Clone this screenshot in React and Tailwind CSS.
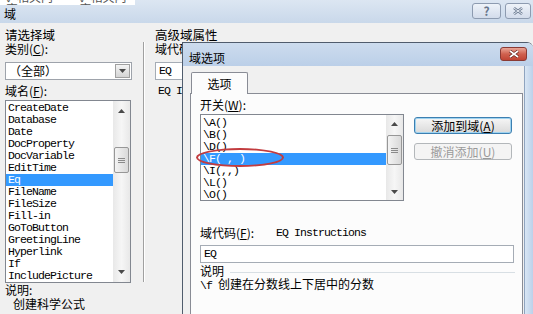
import React from 'react';

const fields = [
  'CreateDate',
  'Database',
  'Date',
  'DocProperty',
  'DocVariable',
  'EditTime',
  'Eq',
  'FileName',
  'FileSize',
  'Fill-in',
  'GoToButton',
  'GreetingLine',
  'Hyperlink',
  'If',
  'IncludePicture',
];

const switches = ['\\A()', '\\B()', '\\D()', '\\F( , )', '\\I(,,)', '\\L()', '\\O()'];

const mono = "font-['Liberation_Mono',monospace] text-[11.5px] tracking-[-0.9px]";

const Arrow = ({ down }) => (
  <svg width="7" height="4" viewBox="0 0 7 4">
    <path d={down ? 'M0 0h7L3.5 4z' : 'M0 4h7L3.5 0z'} fill="#4a4a4a" />
  </svg>
);

const ScrollBar = ({ btn, thumb }) => (
  <div className="flex w-[17px] flex-col bg-gradient-to-r from-[#e8e8e8] via-[#f6f6f6] to-[#e8e8e8]">
    <div className={`flex ${btn} items-center justify-center`}>
      <Arrow />
    </div>
    <div className="flex-1 px-[1px]">
      <div
        className={`flex ${thumb} flex-col items-center justify-center gap-[1px] rounded-[2px] border border-[#979797] bg-gradient-to-r from-[#f4f4f4] to-[#d9d9d9]`}
      >
        <div className="h-[1px] w-[7px] bg-[#8a8a8a]" />
        <div className="h-[1px] w-[7px] bg-[#8a8a8a]" />
        <div className="h-[1px] w-[7px] bg-[#8a8a8a]" />
      </div>
    </div>
    <div className={`flex ${btn} items-center justify-center`}>
      <Arrow down />
    </div>
  </div>
);

const FieldList = () => (
  <div className="mt-[2px] flex h-[183px] w-[126px] border border-[#828790] bg-white">
    <div className={`flex-1 overflow-hidden pt-[1px] ${mono} leading-[12px]`}>
      {fields.map((f) => (
        <div
          key={f}
          className={`h-[12px] pl-[2px] ${f === 'Eq' ? 'bg-[#3399ff] text-white' : ''}`}
        >
          {f}
        </div>
      ))}
    </div>
    <ScrollBar btn="h-[20px]" thumb="mt-[26px] h-[26px]" />
  </div>
);

const SwitchList = () => (
  <div className="relative">
    <div className="flex h-[87px] w-[204px] border border-[#828790] bg-white">
      <div className={`flex-1 overflow-hidden pt-[2px] ${mono} leading-[12px]`}>
        {switches.map((s) => (
          <div
            key={s}
            className={`h-[12px] pl-[2px] ${s === '\\F( , )' ? 'bg-[#3399ff] text-white' : ''}`}
          >
            {s}
          </div>
        ))}
      </div>
      <ScrollBar btn="h-[17px]" thumb="mt-[3px] h-[30px]" />
    </div>
    <div className="pointer-events-none absolute left-[-4px] top-[34px] h-[19px] w-[88px] rounded-[50%] border-2 border-[#c23c3f]" />
  </div>
);

const InnerDialog = () => (
  <div className="absolute left-[182px] top-[42px] flex h-[280px] w-[351px] flex-col overflow-hidden rounded-tr-[6px] border-l border-t border-[#505c6c] bg-[#f0f0f0]">
    <div className="flex h-[23px] shrink-0 items-start bg-gradient-to-b from-[#cddcee] to-[#bbcfe8]">
      <div className="pl-[6px] pt-[8px] text-[12px] leading-[14px]">域选项</div>
      <div className="ml-auto mr-[6px] mt-[4px] flex h-[14px] w-[27px] items-center justify-center rounded-[3px] border border-[#8a3a34] bg-gradient-to-b from-[#e9a597] via-[#d0614f] to-[#c04434]">
        <svg width="10" height="8" viewBox="0 0 10 8">
          <path d="M1 1l8 6M9 1L1 7" stroke="#5a1e18" strokeWidth="3" />
          <path d="M1 1l8 6M9 1L1 7" stroke="#ffffff" strokeWidth="1.6" />
        </svg>
      </div>
    </div>
    <div className="flex flex-1">
      <div className="flex w-[341px] flex-col pl-[7px] pt-[6px]">
        <div className="relative z-10 -mb-[1px] ml-[1px] flex h-[22px] w-[57px] items-center justify-center rounded-t-[2px] border border-b-0 border-[#898c95] bg-[#fcfcfc] text-[12px] leading-[14px]">
          选项
        </div>
        <div className="flex w-[333px] flex-1 flex-col border border-[#898c95] bg-[#fcfcfc] pl-[9px] pt-[4px]">
          <div className="text-[12px] leading-[14px]">
            开关(<u>W</u>):
          </div>
          <div className="mt-[2px] flex">
            <SwitchList />
            <div className="ml-[10px] mt-[3px] flex flex-col gap-[9px]">
              <div className="flex h-[17px] w-[98px] items-center justify-center rounded-[3px] border border-[#3c7fb1] bg-gradient-to-b from-[#f6f6f6] to-[#dadada] text-[12px] leading-[14px] shadow-[inset_0_0_0_1px_#9fd3f0]">
                添加到域(<u>A</u>)
              </div>
              <div className="flex h-[17px] w-[98px] items-center justify-center rounded-[3px] border border-[#b3b7ba] bg-[#f4f4f4] text-[12px] leading-[14px] text-[#9a9a9a]">
                撤消添加(<u>U</u>)
              </div>
            </div>
          </div>
          <div className="mt-[25px] flex items-center">
            <span className="w-[76px] text-[12px] leading-[14px]">
              域代码(<u>F</u>):
            </span>
            <span className={`${mono} leading-[14px]`}>EQ Instructions</span>
          </div>
          <div className="mt-[5px] flex h-[18px] w-[314px] items-center border border-[#a5acb5] bg-white pl-[3px]">
            <span className={`${mono} leading-[12px]`}>EQ</span>
          </div>
          <div className="mt-[1px] flex w-[315px] items-center">
            <span className="text-[12px] leading-[13px]">说明</span>
            <div className="ml-[6px] mt-[4px] h-[1px] flex-1 bg-[#d8dfe4]" />
          </div>
          <div className="text-[12px] leading-[13px]">
            <span className={mono}>\f </span>创建在分数线上下居中的分数
          </div>
        </div>
      </div>
      <div className="w-[9px] border-l border-[#8fa4bf] bg-gradient-to-r from-[#d9e6f4] to-[#bcd1ea]" />
    </div>
  </div>
);

export default function App() {
  return (
    <div className="relative h-[314px] w-[533px] overflow-hidden bg-[#f0f0f0] font-['Noto_Sans_CJK_SC',sans-serif] text-black">
      {/* outer title bar */}
      <div className="flex h-[23px] items-start bg-gradient-to-b from-[#dce6f2] to-[#c9d8ea]">
        <div className="flex flex-col">
          <div className="h-[5px] w-[135px] overflow-hidden bg-white">
            <div className="-mt-[9px] flex gap-[18px] pl-[6px] text-[12px] leading-[12px] text-[#555]">
              <span>✓ 相关内容</span>
              <span>✓ 相关内容</span>
            </div>
          </div>
          <div className="mt-[2px] pl-[4px] text-[12px] leading-[14px]">域</div>
        </div>
        <div className="ml-auto mr-[2px] mt-[3px] flex gap-[4px]">
          <div className="flex h-[16px] w-[29px] items-center justify-center rounded-[3px] border border-[#8d9bb0] bg-gradient-to-b from-[#eef3f9] to-[#d3dceb] text-[12px] font-bold leading-[12px] text-[#67768c]">
            ?
          </div>
          <div className="flex h-[16px] w-[26px] items-center justify-center rounded-[3px] border border-[#8d9bb0] bg-gradient-to-b from-[#eef3f9] to-[#d3dceb]">
            <svg width="10" height="8" viewBox="0 0 10 8">
              <path d="M1 1l8 6M9 1L1 7" stroke="#6d7c92" strokeWidth="2.6" />
              <path d="M1 1l8 6M9 1L1 7" stroke="#e8eef6" strokeWidth="1" />
            </svg>
          </div>
        </div>
      </div>

      {/* outer body */}
      <div className="flex">
        <div className="flex w-[143px] flex-col pl-[5px] pt-[5px]">
          <div className="text-[12.5px] leading-[14px]">请选择域</div>
          <div className="text-[12px] leading-[14px]">
            类别(<u>C</u>):
          </div>
          <div className="mt-[6px] flex h-[18px] w-[127px] items-center border border-[#9ea3ab] bg-white">
            <span className="flex-1 pl-[3px] text-[12px] leading-[14px]">（全部）</span>
            <div className="mr-[1px] flex h-[14px] w-[15px] items-center justify-center border border-[#a0a0a0] bg-gradient-to-b from-[#f4f4f4] to-[#d4d4d4]">
              <Arrow down />
            </div>
          </div>
          <div className="mt-[4px] text-[12px] leading-[14px]">
            域名(<u>F</u>):
          </div>
          <FieldList />
          <div className="text-[12px] leading-[13px]">说明:</div>
          <div className="mt-[1px] pl-[8px] text-[12px] leading-[13px]">创建科学公式</div>
        </div>

        <div className="mt-[19px] h-[240px] w-[2px] border-l border-[#a0a0a0] bg-white" />

        <div className="flex flex-col pl-[10px] pt-[5px]">
          <div className="text-[12.5px] leading-[14px]">高级域属性</div>
          <div className="text-[12px] leading-[14px]">
            域代码(<u>F</u>):
          </div>
          <div className="mt-[6px] flex h-[18px] w-[200px] items-center border border-[#a5acb5] bg-white pl-[3px]">
            <span className={`${mono} leading-[12px]`}>EQ</span>
          </div>
          <div className={`mt-[4px] pl-[3px] ${mono} leading-[14px]`}>EQ Instructions</div>
        </div>
      </div>

      <InnerDialog />
    </div>
  );
}
